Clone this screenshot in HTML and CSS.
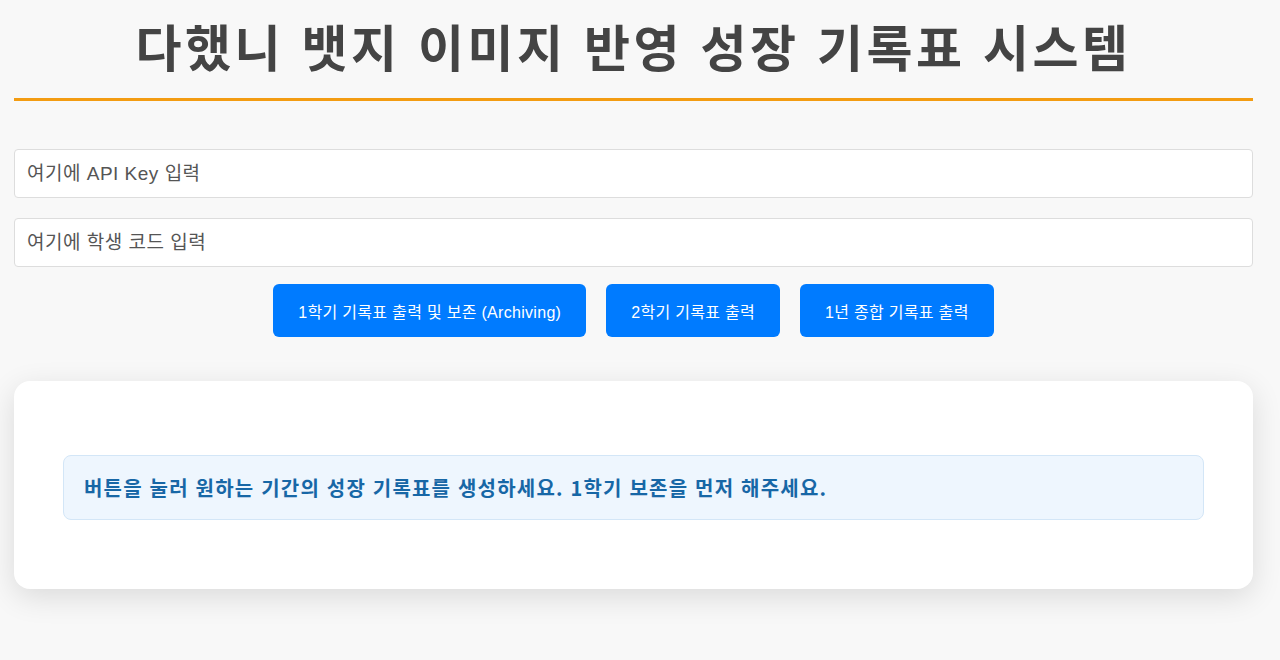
FILE: index.html
```html
<!DOCTYPE html>
<html lang="ko">
<head>
  <meta charset="UTF-8" />
  <meta name="viewport" content="width=device-width, initial-scale=1.0" />
  <title>다했니 뱃지 이미지 반영 성장 기록표 시스템</title>
  <link rel="stylesheet" href="styles.css">
</head>
<body>
  <div class="container">
    <h1 class="title">다했니 뱃지 이미지 반영 성장 기록표 시스템</h1>

    <div class="form">
      <input type="text" class="field" id="api-key" placeholder="여기에 API Key 입력" />
      <input type="text" class="field" id="student-code" placeholder="여기에 학생 코드 입력" />
    </div>

    <div class="actions">
      <button class="btn">1학기 기록표 출력 및 보존 (Archiving)</button>
      <button class="btn">2학기 기록표 출력</button>
      <button class="btn">1년 종합 기록표 출력</button>
    </div>

    <div class="result">
      <div class="notice">버튼을 눌러 원하는 기간의 성장 기록표를 생성하세요. 1학기 보존을 먼저 해주세요.</div>
    </div>
  </div>
</body>
</html>
```

FILE: styles.css
```css
* {
  box-sizing: border-box;
}

html, body {
  margin: 0;
  padding: 0;
  background: #f8f8f8;
  font-family: "Liberation Sans", "Noto Sans CJK KR", sans-serif;
  color: #333;
}

.container {
  width: 1239px;
  margin: 0 0 60px 14px;
}

.title {
  margin: 0;
  padding: 10px 0 18px;
  text-align: center;
  font-family: "Noto Sans CJK KR", sans-serif;
  font-size: 50px;
  line-height: 70px;
  font-weight: 700;
  letter-spacing: 3.5px;
  color: #444;
  border-bottom: 3px solid #f39c12;
}

.form {
  display: flex;
  flex-direction: column;
  gap: 20px;
  margin-top: 48px;
}

.field {
  width: 100%;
  height: 49px;
  padding: 0 12px;
  border: 1px solid #ddd;
  border-radius: 4px;
  background: #fff;
  font-family: "Liberation Sans", "Noto Sans CJK KR", sans-serif;
  font-size: 19px;
  letter-spacing: 0.5px;
  color: #333;
}

.field::placeholder {
  color: #555;
}

.actions {
  display: flex;
  justify-content: center;
  gap: 20px;
  margin-top: 17px;
}

.btn {
  height: 53px;
  padding: 0 25px;
  border: none;
  border-radius: 6px;
  background: #007bff;
  color: #fff;
  font-family: "Liberation Sans", "Noto Sans CJK KR", sans-serif;
  font-size: 16px;
  letter-spacing: 0.3px;
  cursor: pointer;
}

.btn:hover {
  background: #0069d9;
}

.result {
  margin-top: 44px;
  padding: 74px 49px 69px;
  background: #fff;
  border-radius: 16px;
  box-shadow: 0 8px 30px rgba(0, 0, 0, 0.12);
}

.notice {
  padding: 19px 20px;
  background: #eef6fe;
  border: 1px solid #d3e6f7;
  border-radius: 8px;
  color: #1767a6;
  font-family: "Noto Sans CJK KR", sans-serif;
  font-size: 20px;
  line-height: 25px;
  font-weight: 700;
  letter-spacing: 1.2px;
}
```
